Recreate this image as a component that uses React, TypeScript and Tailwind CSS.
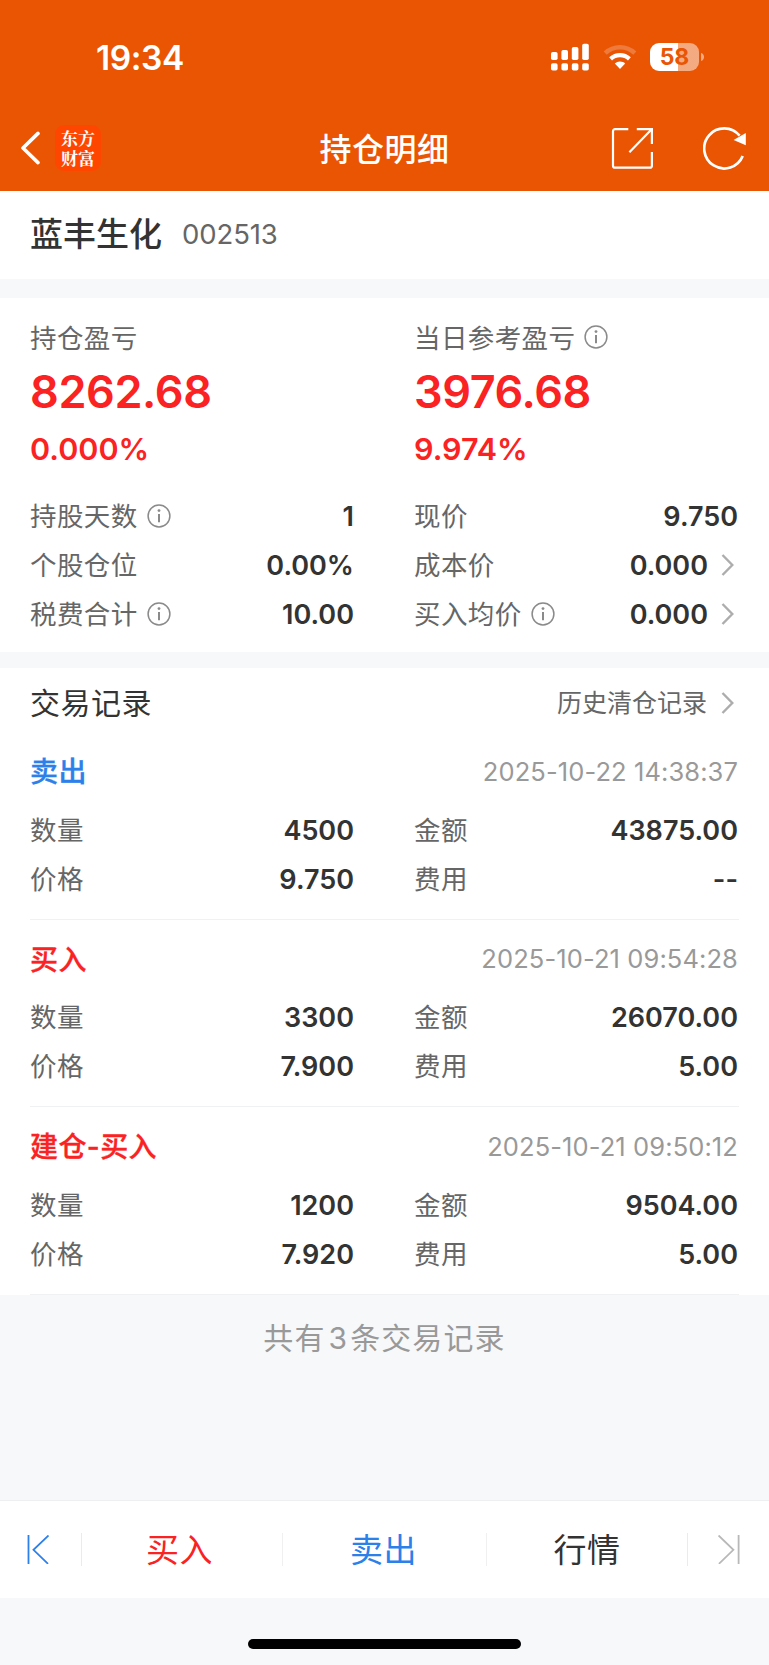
import React from 'react'

type FieldType = {
  label: string
  value: string
  info?: boolean
  link?: boolean
}

type TradeType = {
  id: number
  side: 'buy' | 'sell'
  title: string
  time: string
  fields: FieldType[]
}

const positionFields: FieldType[] = [
  { label: '持股天数', value: '1', info: true },
  { label: '现价', value: '9.750' },
  { label: '个股仓位', value: '0.00%' },
  { label: '成本价', value: '0.000', link: true },
  { label: '税费合计', value: '10.00', info: true },
  { label: '买入均价', value: '0.000', info: true, link: true },
]

const trades: TradeType[] = [
  {
    id: 1,
    side: 'sell',
    title: '卖出',
    time: '2025-10-22 14:38:37',
    fields: [
      { label: '数量', value: '4500' },
      { label: '金额', value: '43875.00' },
      { label: '价格', value: '9.750' },
      { label: '费用', value: '--' },
    ],
  },
  {
    id: 2,
    side: 'buy',
    title: '买入',
    time: '2025-10-21 09:54:28',
    fields: [
      { label: '数量', value: '3300' },
      { label: '金额', value: '26070.00' },
      { label: '价格', value: '7.900' },
      { label: '费用', value: '5.00' },
    ],
  },
  {
    id: 3,
    side: 'buy',
    title: '建仓-买入',
    time: '2025-10-21 09:50:12',
    fields: [
      { label: '数量', value: '1200' },
      { label: '金额', value: '9504.00' },
      { label: '价格', value: '7.920' },
      { label: '费用', value: '5.00' },
    ],
  },
]

function InfoIcon() {
  return (
    <svg className="ml-[9px] h-6 w-6 shrink-0" viewBox="0 0 24 24" fill="none" stroke="#8a8a8a">
      <circle cx="12" cy="12" r="10.9" strokeWidth="1.5" />
      <path d="M12 10v8.3" strokeWidth="2" />
      <circle cx="12" cy="6.6" r="1.4" fill="#8a8a8a" stroke="none" />
    </svg>
  )
}

function ChevronIcon() {
  return (
    <svg className="mr-1 ml-[13px] h-6 w-[13px] shrink-0" viewBox="0 0 13 24" fill="none" stroke="#adadad" strokeWidth="2.4">
      <path d="M1.5 2l9.8 10-9.8 10" />
    </svg>
  )
}

function StatusBar() {
  return (
    <div className="flex h-[114px] items-center justify-between pr-[65px] pl-24">
      <span className="pt-[2px] text-[33.5px] font-semibold tracking-[-0.4px]">19:34</span>
      <div className="flex items-center">
        <svg className="h-7 w-[38px]" viewBox="0 0 38 28" fill="#fff">
          <rect x="0" y="9" width="6.6" height="8" rx="1.8" />
          <rect x="10.4" y="7" width="6.6" height="10" rx="1.8" />
          <rect x="20.8" y="4" width="6.6" height="13" rx="1.8" />
          <rect x="31.2" y="0.8" width="6.6" height="16.2" rx="1.8" />
          <rect x="0" y="20.2" width="6.6" height="7.4" rx="1.8" />
          <rect x="10.4" y="20.2" width="6.6" height="7.4" rx="1.8" />
          <rect x="20.8" y="20.2" width="6.6" height="7.4" rx="1.8" />
          <rect x="31.2" y="20.2" width="6.6" height="7.4" rx="1.8" />
        </svg>
        <svg className="ml-[14px] h-[26px] w-[34px]" viewBox="0 0 34 26" fill="none" stroke="#fff">
          <path d="M2.2 9.2a21.5 21.5 0 0 1 29.6 0" strokeWidth="4.4" strokeOpacity="0.22" />
          <path d="M7.6 14.9a13.8 13.8 0 0 1 18.8 0" strokeWidth="4.2" />
          <path d="M17 17.6c2 0 3.8.7 5.2 1.9L17 25l-5.2-5.5a7.8 7.8 0 0 1 5.2-1.9z" fill="#fff" stroke="none" />
        </svg>
        <div className="ml-[13px] flex h-7 w-[49px] items-center justify-center rounded-[9px] bg-linear-to-r from-white from-58% to-white/50 to-58% text-[23px] leading-7 font-bold text-[#ea5504]">
          58
        </div>
        <svg className="ml-[2px] h-2 w-[3px]" viewBox="0 0 3 8">
          <path d="M0 0c4 1 4 7 0 8z" fill="#fff" fillOpacity="0.5" />
        </svg>
      </div>
    </div>
  )
}

function NavBar() {
  return (
    <div className="flex h-[77px] items-start justify-between pr-[23px] pl-5">
      <div className="flex w-[138px] items-center pt-[11px]">
        <svg className="h-[34px] w-5" viewBox="0 0 20 34" fill="none" stroke="#fff" strokeWidth="3.6" strokeLinecap="round" strokeLinejoin="round">
          <path d="M18 2.4L3 17l15 14.6" />
        </svg>
        <div className="ml-[15px] flex h-[46px] w-[46px] flex-col items-center justify-center rounded-[9px] bg-[#ff4600] font-['Noto_Serif_CJK_SC','Noto_Sans_CJK_SC',serif] text-[17px] font-bold">
          <span className="leading-5">东方</span>
          <span className="leading-5">财富</span>
        </div>
      </div>
      <h1 className="pt-3 text-[32px] leading-[48px] font-medium tracking-[0.5px]">持仓明细</h1>
      <div className="flex w-[135px] items-start justify-between pt-[13px]">
        <svg className="h-[43px] w-[43px]" viewBox="0 0 43 43" fill="none" stroke="#fff" strokeWidth="2.2">
          <path d="M17.3 2.1H4a2 2 0 0 0-2 2v34.6a2 2 0 0 0 2 2h34.9a2 2 0 0 0 2-2V25" />
          <path d="M25.8 2.1h15.1v15M40.9 2.1L18.4 25.2" />
        </svg>
        <svg className="h-[43px] w-[43px]" viewBox="0 0 43 43">
          <path d="M39.7 29A20 20 0 1 1 36.6 8.7" fill="none" stroke="#fff" strokeWidth="2.7" />
          <path d="M42.8 6v12.3l-12.2-5.2z" fill="#fff" />
        </svg>
      </div>
    </div>
  )
}

function FieldGrid({ fields }: { fields: FieldType[] }) {
  return (
    <div className="grid grid-cols-[324px_324px] gap-x-[60px]">
      {fields.map((field) => (
        <div key={field.label} className="flex h-[49px] items-center">
          <span className="pt-[2px] text-[26.5px] tracking-[0.4px] text-[#666]">{field.label}</span>
          {field.info && <InfoIcon />}
          <span className="ml-auto pt-[3px] text-[27px] font-semibold text-[#333]">{field.value}</span>
          {field.link && <ChevronIcon />}
        </div>
      ))}
    </div>
  )
}

function Profit({ label, value, percent, info }: { label: string; value: string; percent: string; info?: boolean }) {
  return (
    <div>
      <div className="flex h-[30px] items-center text-[26.5px] tracking-[0.4px] text-[#666]">
        <span className="pt-[3px]">{label}</span>
        {info && <InfoIcon />}
      </div>
      <p className="mt-[15px] text-[45px] leading-[50px] font-semibold tracking-[-0.4px]">{value}</p>
      <p className="mt-[14px] text-[30.5px] leading-[36px] font-semibold">{percent}</p>
    </div>
  )
}

function Trade({ trade }: { trade: TradeType }) {
  return (
    <li className="h-[187.6px] border-b border-[#f0f1f3] pt-5">
      <div className="flex h-10 items-center justify-between pr-px">
        <span
          className={`text-[28px] font-medium tracking-[0.4px] [-webkit-text-stroke:0.3px_currentColor] ${trade.side === 'sell' ? 'text-[#2b80ea]' : 'text-[#fa2222]'}`}
        >
          {trade.title}
        </span>
        <time className="text-[25.5px] tracking-[0.1px] text-[#999]">{trade.time}</time>
      </div>
      <div className="pt-[13px]">
        <FieldGrid fields={trade.fields} />
      </div>
    </li>
  )
}

function BottomBar() {
  return (
    <nav className="flex h-[98px] items-center border-t border-[#eeeff1] bg-white text-[33px] tracking-[0.5px] text-[#333]">
      <div className="flex h-[33px] w-[82px] items-center border-r border-[#ebebeb] pl-[27px]">
        <svg className="h-[29px] w-[22px]" viewBox="0 0 22 29" fill="none" stroke="#2b80ea" strokeWidth="1.8">
          <path d="M1.5 0v29M21.5.5L6.5 14.8l14.5 14" />
        </svg>
      </div>
      <div className="flex h-[33px] w-[201px] items-center justify-center border-r border-[#f0f0f0] pt-[2px] pr-[5px] text-[#fa2222]">
        买入
      </div>
      <div className="flex h-[33px] w-[204px] items-center justify-center border-r border-[#f0f0f0] pt-[2px] pr-[2px] text-[#2b80ea]">
        卖出
      </div>
      <div className="flex h-[33px] w-[201px] items-center justify-center border-r border-[#ebebeb] pt-[2px]">行情</div>
      <div className="flex pl-[30px]">
        <svg className="h-[29px] w-[22px]" viewBox="0 0 22 29" fill="none" stroke="#b8b8b8" strokeWidth="1.8">
          <path d="M20.6 0v29M.6.5L15.4 14.8.9 28.8" />
        </svg>
      </div>
    </nav>
  )
}

export default function App() {
  return (
    <div className="flex h-[1665px] w-[769px] flex-col overflow-hidden bg-[#f7f8fa] font-['Inter','Noto_Sans_CJK_SC',sans-serif]">
      <header className="bg-[#ea5504] text-white">
        <StatusBar />
        <NavBar />
      </header>

      <section className="flex h-[88px] items-center bg-white px-[30px]">
        <h2 className="text-[33px] font-medium text-[#333]">蓝丰生化</h2>
        <span className="ml-5 text-[27.5px] tracking-[-0.1px] text-[#666]">002513</span>
      </section>

      <section className="mt-[19px] h-[354px] bg-white px-[30px] pt-6">
        <div className="grid grid-cols-2 gap-x-[60px] pr-px text-[#fa2222]">
          <Profit label="持仓盈亏" value="8262.68" percent="0.000%" />
          <Profit label="当日参考盈亏" value="3976.68" percent="9.974%" info />
        </div>
        <div className="mt-6">
          <FieldGrid fields={positionFields} />
        </div>
      </section>

      <section className="mt-4 h-[627px] bg-white px-[30px]">
        <div className="flex h-16 items-center justify-between pt-[6px] pr-px">
          <h2 className="text-[30px] tracking-[0.5px] text-[#333]">交易记录</h2>
          <a className="flex items-center text-[25px] text-[#666]">
            <span className="pt-[2px] pr-px">历史清仓记录</span>
            <ChevronIcon />
          </a>
        </div>
        <ul>
          {trades.map((trade) => (
            <Trade key={trade.id} trade={trade} />
          ))}
        </ul>
      </section>

      <p className="pt-[25px] text-center text-[30px] leading-9 tracking-[1.1px] text-[#999]">
        共有<span className="mr-[2px] ml-[3px]">{trades.length}</span>条交易记录
      </p>

      <footer className="mt-auto">
        <BottomBar />
        <div className="flex h-[67px] items-end justify-center pb-4">
          <div className="h-[10px] w-[273px] rounded-full bg-black" />
        </div>
      </footer>
    </div>
  )
}
